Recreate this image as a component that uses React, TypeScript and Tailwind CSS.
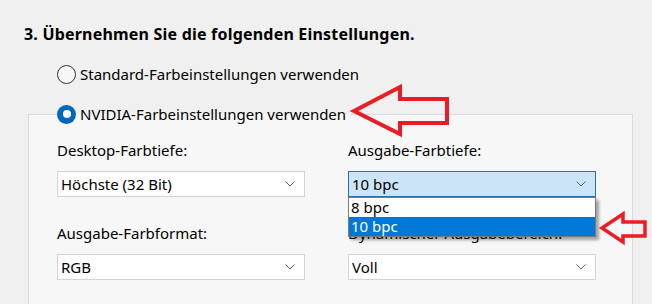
import React from "react";

function Chevron() {
  return (
    <svg width="10" height="6" viewBox="0 0 10 6" className="shrink-0">
      <path d="M0.5 0.5 L5 5 L9.5 0.5" fill="none" stroke="#606060" strokeWidth="1" />
    </svg>
  );
}

function Combo({ value, active = false }: { value: string; active?: boolean }) {
  return (
    <div
      className={
        active
          ? "h-[26px] w-[248px] flex items-center justify-between pl-[3px] pr-[9px] border border-[#2f6fae] bg-[#cce4f7]"
          : "h-[26px] w-[248px] flex items-center justify-between pl-[3px] pr-[9px] border border-[#d4d4d4] bg-white"
      }
    >
      <span className="leading-[20px]">{value}</span>
      <Chevron />
    </div>
  );
}

export default function App() {
  return (
    <div
      className="relative w-[652px] h-[304px] overflow-hidden bg-[#f0f0f0] text-black text-[15px]"
      style={{ fontFamily: '"Noto Sans", sans-serif' }}
    >
      <div className="pl-[24px] pt-[24px] font-bold text-[16px] tracking-[0.2px] leading-[20px]">
        3. Übernehmen Sie die folgenden Einstellungen.
      </div>

      <div className="mt-[20px] ml-[57px] flex items-center gap-[4px] h-[20px]">
        <span className="w-[19px] h-[19px] rounded-full border border-[#333] bg-[#f7f7f7]" />
        <span className="leading-[20px]">Standard-Farbeinstellungen verwenden</span>
      </div>

      <fieldset className="mt-[19px] ml-[28px] w-[605px] h-[220px] border border-[#dadada] bg-[#f7f7f7]">
        <legend className="ml-[28px] pr-[4px] flex items-center gap-[4px] h-[22px]">
          <span className="w-[19px] h-[19px] rounded-full bg-[#0067c0] flex items-center justify-center">
            <span className="w-[8px] h-[8px] rounded-full bg-white" />
          </span>
          <span className="leading-[20px]">NVIDIA-Farbeinstellungen verwenden</span>
        </legend>

        <div className="grid grid-cols-[248px_248px] gap-x-[43px] pl-[28px] pt-[15px]">
          <div className="leading-[20px]">Desktop-Farbtiefe:</div>
          <div className="leading-[20px]">Ausgabe-Farbtiefe:</div>

          <div className="mt-[11px]">
            <Combo value="Höchste (32 Bit)" />
          </div>
          <div className="mt-[11px] relative">
            <Combo value="10 bpc" active />
            <div className="absolute left-0 top-[26px] w-[248px] border border-[#7a7a7a] bg-white shadow-[3px_3px_3px_rgba(0,0,0,0.35)] z-10">
              <div className="h-[19px] pl-[2px] flex items-center leading-[19px]">8 bpc</div>
              <div className="h-[19px] pl-[2px] flex items-center leading-[19px] bg-[#0078d7] text-white">10 bpc</div>
            </div>
          </div>

          <div className="mt-[26px] leading-[20px]">Ausgabe-Farbformat:</div>
          <div className="mt-[26px] leading-[20px]">Dynamischer Ausgabebereich:</div>

          <div className="mt-[11px]">
            <Combo value="RGB" />
          </div>
          <div className="mt-[11px]">
            <Combo value="Voll" />
          </div>
        </div>
      </fieldset>

      <svg className="absolute inset-0 pointer-events-none z-20" width="652" height="304">
        <path
          d="M354 111 L400 87 L400 99 L447 99 L447 123 L400 123 L400 134 Z"
          fill="none"
          stroke="#ed1c24"
          strokeWidth="4"
          strokeLinejoin="miter"
        />
        <path
          d="M602 228 L623 214 L623 222 L645 222 L645 236 L623 236 L623 242 Z"
          fill="none"
          stroke="#ed1c24"
          strokeWidth="3.5"
          strokeLinejoin="miter"
        />
      </svg>
    </div>
  );
}
